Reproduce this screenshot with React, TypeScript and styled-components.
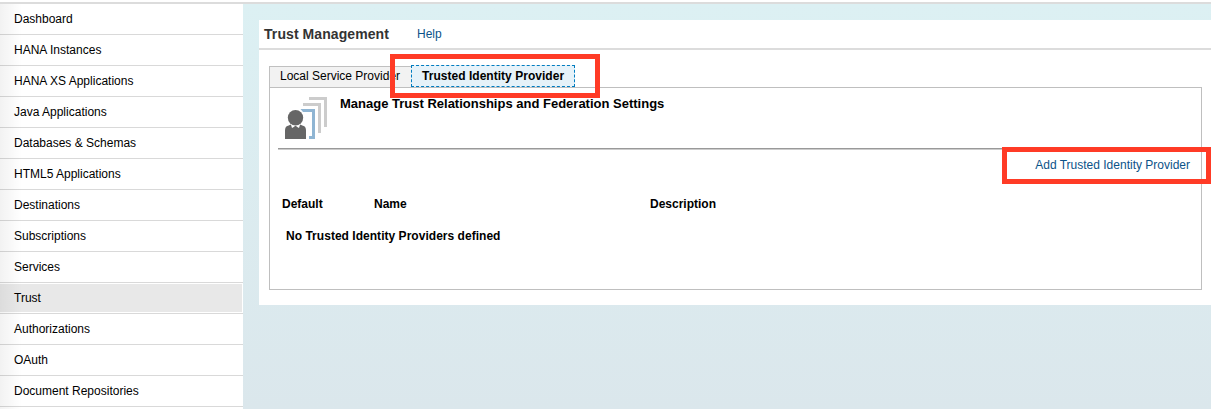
import React from "react";
import styled, { createGlobalStyle } from "styled-components";

const GlobalStyle = createGlobalStyle`
  * { box-sizing: border-box; }
  body {
    margin: 0;
    overflow: hidden;
    background: #fff;
    color: #000;
    font: 12px/14px "Liberation Sans", Arial, sans-serif;
  }
`;

const Page = styled.div`
  display: flex;
  flex-direction: column;
  width: 1211px;
  height: 409px;
  overflow: hidden;
`;

const TopBar = styled.header`
  flex: none;
  height: 4px;
  border-bottom: 2px solid #dcdcdc;
`;

const Body = styled.div`
  display: flex;
  flex: 1;
  min-height: 0;
`;

const Sidebar = styled.nav`
  position: relative;
  flex: none;
  width: 243px;
  overflow: hidden;
  background: #fff;
  &::after {
    content: "";
    position: absolute;
    inset: 0 auto 0 0;
    width: 22px;
    background: linear-gradient(to right, rgba(0, 0, 0, 0.05), rgba(0, 0, 0, 0));
  }
`;

const NavItem = styled.a<{ $active?: boolean }>`
  display: flex;
  align-items: center;
  height: 31px;
  padding: 0 14px 1px;
  border-bottom: 1px solid #d9d9d9;
  background: ${(p) => (p.$active ? "#e8e8e8" : "#fff")};
  box-shadow: ${(p) => (p.$active ? "inset 0 1px #fff, inset -1px -1px #fff" : "none")};
`;

const Main = styled.main`
  flex: 1;
  padding: 16px 0 0 16px;
  background: linear-gradient(#dcf0f3, #dbe7ec);
`;

const Panel = styled.section`
  height: 285px;
  background: #fff;
`;

const PanelHeader = styled.div`
  display: flex;
  align-items: center;
  gap: 28px;
  height: 30px;
  padding: 0 5px;
  border-bottom: 2px solid #dcdcdc;
`;

const Title = styled.h1`
  margin: 0;
  font-size: 14px;
  line-height: 16px;
  letter-spacing: 0.08px;
  color: #333;
`;

const Link = styled.a`
  color: #0b5389;
`;

const PanelBody = styled.div`
  padding: 15px 9px 0 10px;
`;

const Tabs = styled.div`
  position: relative;
  display: flex;
  align-items: flex-end;
  height: 22px;
`;

const Tab = styled.div`
  width: 142px;
  height: 21px;
  padding: 2px 0 0 10px;
  border: 1px solid #c0c0c0;
  border-width: 1px 0 0 1px;
  background: #f2f2f2;
  white-space: nowrap;
`;

const ActiveTab = styled.div`
  width: 164px;
  height: 22px;
  padding: 3px 0 0 10px;
  border: 1px dashed #007cc0;
  background: #e6f2f9;
  font-weight: bold;
  letter-spacing: 0.03px;
  white-space: nowrap;
`;

const Highlight = styled.div<{ $top: number; $left: number; $width: number; $height: number }>`
  position: absolute;
  z-index: 2;
  top: ${(p) => p.$top}px;
  left: ${(p) => p.$left}px;
  width: ${(p) => p.$width}px;
  height: ${(p) => p.$height}px;
  border: 5px solid #ff3b26;
`;

const TabContent = styled.div`
  height: 203px;
  padding: 9px 8px 0;
  border: 1px solid #bfbfbf;
`;

const Intro = styled.div`
  display: flex;
  gap: 13px;
  height: 53px;
  padding-left: 7px;
  border-bottom: 1px solid #ccc;
  box-shadow: inset 0 -1px #999;
`;

const Heading = styled.h2`
  margin: 0;
  font-size: 13px;
  line-height: 14px;
`;

const Actions = styled.div`
  position: relative;
  display: flex;
  justify-content: flex-end;
  height: 47px;
  padding: 8px 3px 0 0;
`;

const Columns = styled.div`
  display: grid;
  grid-template-columns: 92px 276px 1fr;
  padding-left: 4px;
  font-weight: bold;
`;

const Empty = styled.div`
  padding: 18px 0 0 8px;
  font-weight: bold;
  letter-spacing: 0.03px;
`;

const items = [
  "Dashboard",
  "HANA Instances",
  "HANA XS Applications",
  "Java Applications",
  "Databases & Schemas",
  "HTML5 Applications",
  "Destinations",
  "Subscriptions",
  "Services",
  "Trust",
  "Authorizations",
  "OAuth",
  "Document Repositories",
];

const TrustIcon = () => (
  <svg width="42" height="42" viewBox="0 0 42 42">
    <path d="M24 0H42V30H39V3H24Z" fill="#ccc" />
    <path d="M18 6H36V36H33V9H18Z" fill="#ccc" />
    <path d="M15.5 12H30V42H24V39H27V15H18Z" fill="#8fb5d3" />
    <path d="M0 42V33.5Q0 29.5 3 28.7L6 27.5H15L18 28.7Q21 29.5 21 33.5V42Z" fill="#666" />
    <path d="M5.6 26.5L7 31L10.5 28.9L14 31L15.4 26.5Z" fill="#fff" />
    <path d="M8.9 30.3L10.5 28.8L12.1 30.3L11.4 32H9.6Z" fill="#666" />
    <circle cx="10.5" cy="20.7" r="7.7" fill="#666" />
  </svg>
);

export default function App() {
  return (
    <Page>
      <GlobalStyle />
      <TopBar />
      <Body>
        <Sidebar>
          {items.map((name) => (
            <NavItem key={name} $active={name === "Trust"}>
              {name}
            </NavItem>
          ))}
        </Sidebar>
        <Main>
          <Panel>
            <PanelHeader>
              <Title>Trust Management</Title>
              <Link>Help</Link>
            </PanelHeader>
            <PanelBody>
              <Tabs>
                <Tab>Local Service Provider</Tab>
                <ActiveTab>Trusted Identity Provider</ActiveTab>
                <Highlight $top={-11} $left={121} $width={210} $height={44} />
              </Tabs>
              <TabContent>
                <Intro>
                  <TrustIcon />
                  <Heading>Manage Trust Relationships and Federation Settings</Heading>
                </Intro>
                <Actions>
                  <Link>Add Trusted Identity Provider</Link>
                  <Highlight $top={-3} $left={724} $width={209} $height={37} />
                </Actions>
                <Columns>
                  <span>Default</span>
                  <span>Name</span>
                  <span>Description</span>
                </Columns>
                <Empty>No Trusted Identity Providers defined</Empty>
              </TabContent>
            </PanelBody>
          </Panel>
        </Main>
      </Body>
    </Page>
  );
}
